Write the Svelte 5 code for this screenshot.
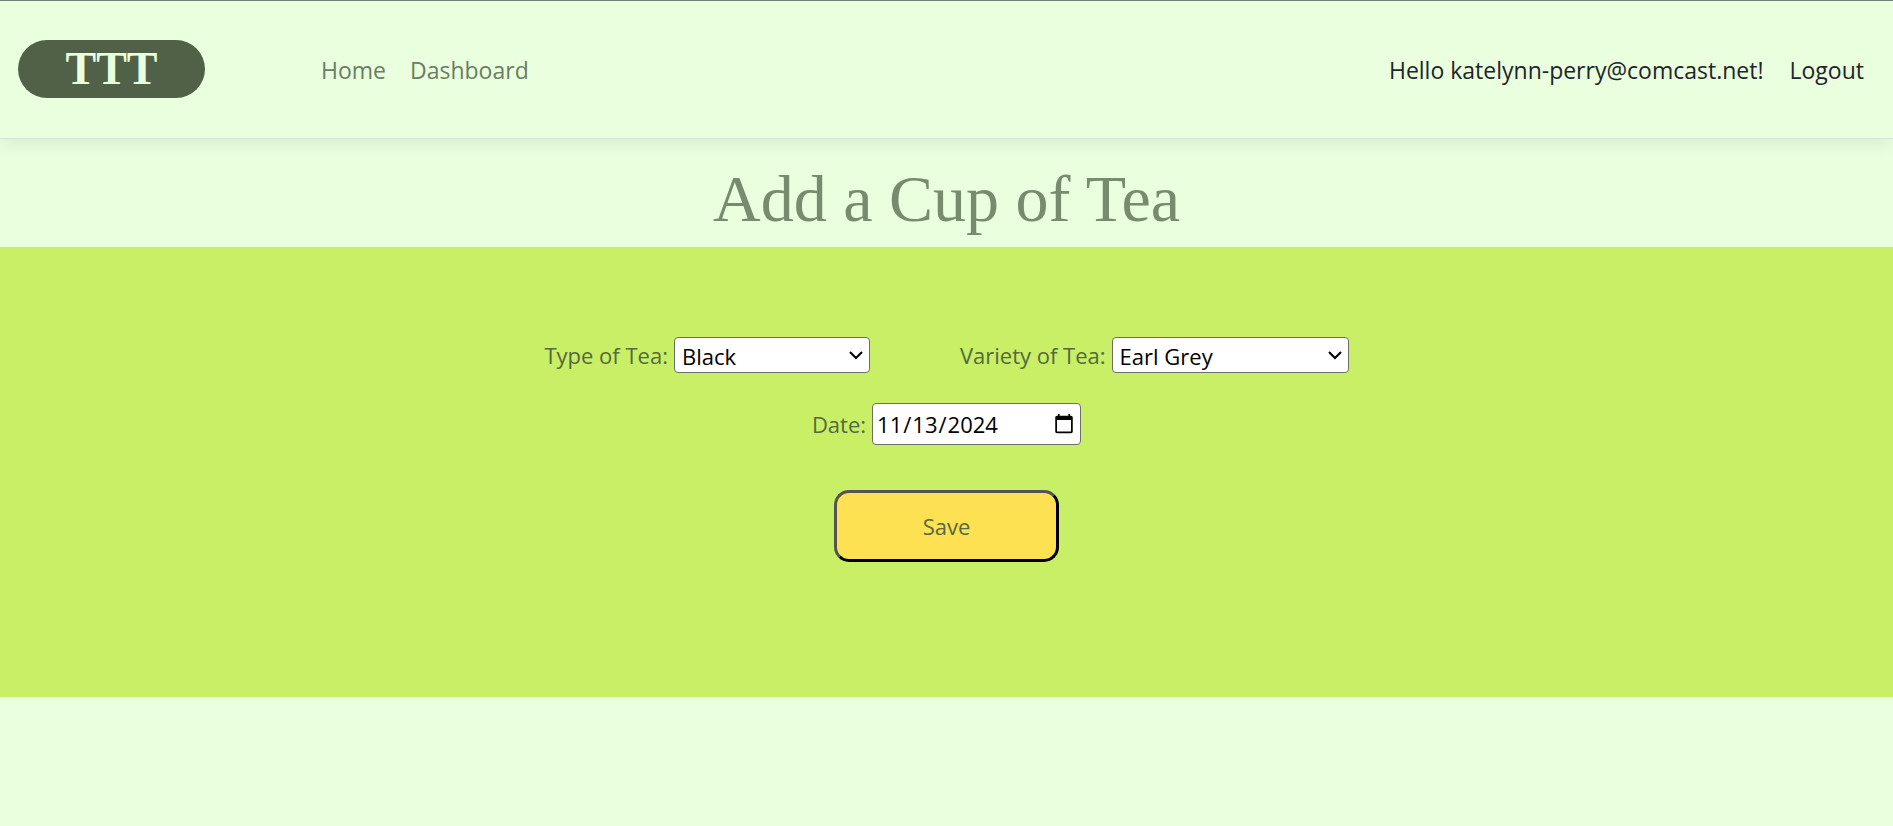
<script lang="ts">
  const varieties: Record<string, string[]> = {
    Black: ['Earl Grey', 'English Breakfast', 'Darjeeling'],
    Green: ['Sencha', 'Matcha', 'Jasmine'],
    Herbal: ['Chamomile', 'Peppermint', 'Rooibos']
  };

  let type = $state('Black');
  let variety = $state('Earl Grey');
  let date = $state('2024-11-13');

  function resetVariety() {
    variety = varieties[type][0];
  }
</script>

{#snippet chevron()}
  <svg class="chevron" viewBox="0 0 14 10" aria-hidden="true">
    <path d="M1 2 L7 8 L13 2" fill="none" stroke="#000" stroke-width="2" />
  </svg>
{/snippet}

<header>
  <a class="brand" href="#home">TTT</a>
  <nav>
    <a href="#home">Home</a>
    <a href="#dashboard">Dashboard</a>
  </nav>
  <div class="account">
    <span>Hello katelynn-perry@comcast.net!</span>
    <a href="#logout">Logout</a>
  </div>
</header>

<main>
  <h1>Add a Cup of Tea</h1>
  <form onsubmit={(e) => e.preventDefault()}>
    <div class="row">
      <div class="field">
        <label for="type">Type of Tea:</label>
        <span class="select">
          <select id="type" class="type" bind:value={type} onchange={resetVariety}>
            {#each Object.keys(varieties) as name}
              <option>{name}</option>
            {/each}
          </select>
          {@render chevron()}
        </span>
      </div>
      <div class="field">
        <label for="variety">Variety of Tea:</label>
        <span class="select">
          <select id="variety" class="variety" bind:value={variety}>
            {#each varieties[type] as name}
              <option>{name}</option>
            {/each}
          </select>
          {@render chevron()}
        </span>
      </div>
    </div>
    <div class="field">
      <label for="date">Date:</label>
      <input id="date" type="date" bind:value={date} />
    </div>
    <button type="submit">Save</button>
  </form>
</main>

<style>
  :global(body) {
    background: #e9ffde;
    color: #212529;
    font: 23px/36px 'Open Sans', 'Noto Sans', sans-serif;
  }

  a {
    color: inherit;
    text-decoration: none;
  }

  header {
    display: flex;
    align-items: center;
    box-sizing: border-box;
    height: 139px;
    padding: 0 29px 0 18px;
    border-top: 1px solid #6f8078;
    border-bottom: 1px solid #d5e5dc;
    box-shadow: 0 8px 16px rgba(0, 0, 0, 0.06);
  }

  .brand {
    box-sizing: border-box;
    width: 187px;
    height: 58px;
    margin-bottom: 2px;
    border-radius: 29px;
    background: #506147;
    color: #e9ffde;
    font: 700 46px/58px 'Liberation Serif', serif;
    text-align: center;
  }

  nav {
    display: flex;
    flex: 1;
    gap: 24px;
    margin-left: 116px;
    color: #6b7d63;
  }

  .account {
    display: flex;
    gap: 26px;
  }

  h1 {
    margin: 0;
    padding: 24px 0 12px;
    color: #778c6c;
    font: 400 66px/72px 'Liberation Serif', serif;
    text-align: center;
  }

  form {
    display: flex;
    flex-direction: column;
    align-items: center;
    box-sizing: border-box;
    min-height: 450px;
    padding: 90px 24px;
    background: #c8ef65;
    color: #56693f;
    font-size: 22px;
  }

  .row {
    display: flex;
    flex-wrap: wrap;
    justify-content: center;
    gap: 30px 90px;
    margin-bottom: 30px;
  }

  .field {
    display: flex;
    align-items: center;
    gap: 6px;
  }

  .select {
    display: grid;
    align-items: center;
  }

  select,
  .chevron {
    grid-area: 1 / 1;
  }

  select,
  input {
    box-sizing: border-box;
    border: 1px solid #6b6f68;
    border-radius: 4px;
    background: #fff;
    color: #000;
    font: inherit;
  }

  select {
    appearance: none;
    height: 36px;
    padding: 0 30px 0 7px;
  }

  .type {
    width: 196px;
  }

  .variety {
    width: 237px;
  }

  .chevron {
    justify-self: end;
    width: 14px;
    height: 10px;
    margin-right: 7px;
    pointer-events: none;
  }

  input {
    width: 209px;
    height: 42px;
    padding: 2px 3px;
  }

  button {
    width: 225px;
    height: 72px;
    margin-top: 45px;
    border: 3px outset #000;
    border-radius: 15px;
    background: #fde152;
    color: #56693f;
    font: inherit;
  }
</style>
